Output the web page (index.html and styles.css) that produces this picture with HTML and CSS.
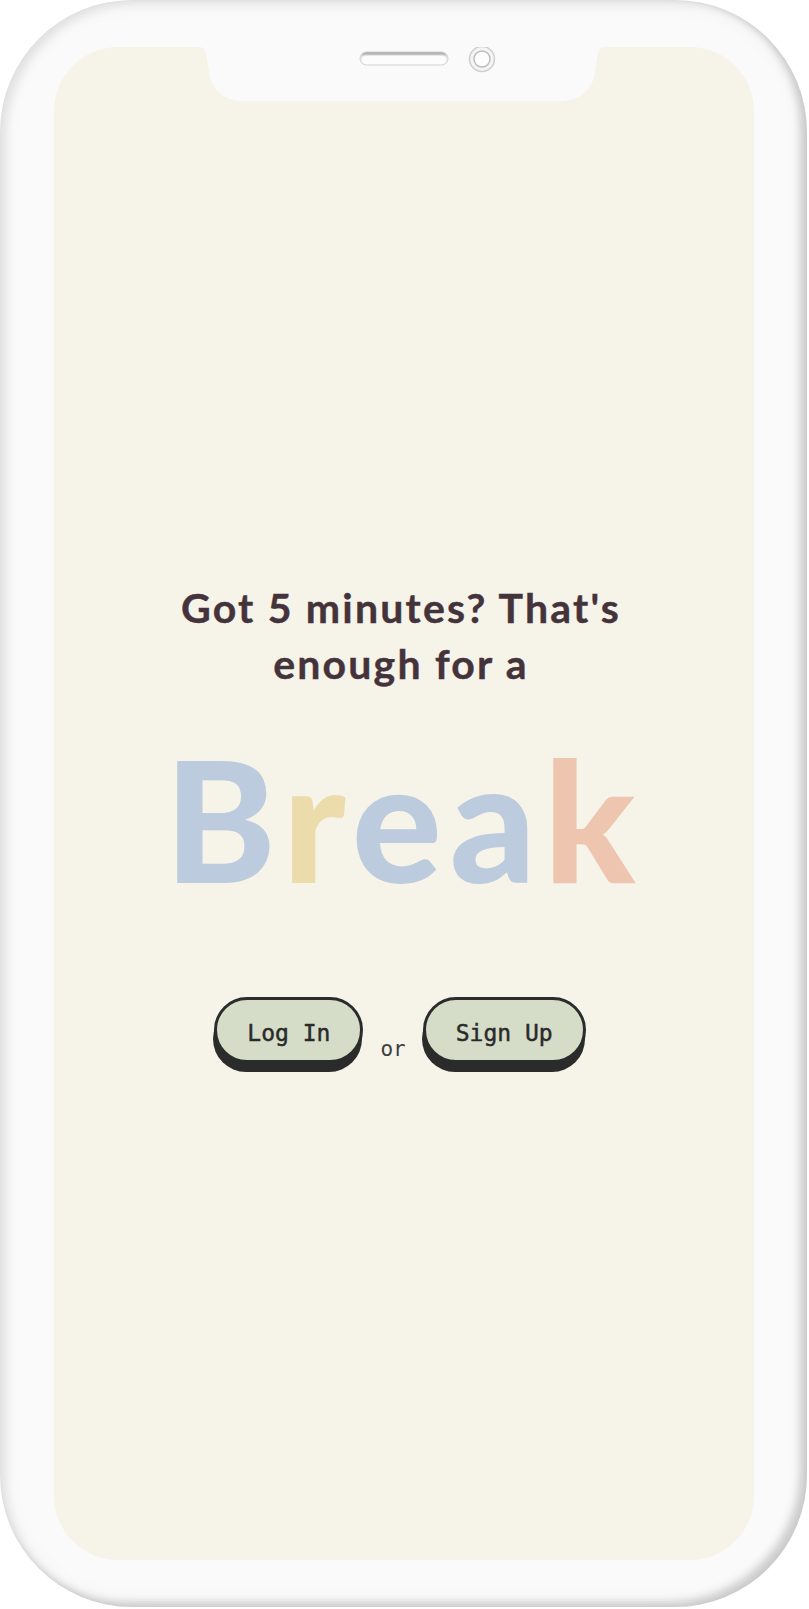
FILE: index.html
```html
<!DOCTYPE html>
<html lang="en">
<head>
<meta charset="utf-8">
<title>Break</title>
<link rel="stylesheet" href="styles.css">
</head>
<body>
<div class="phone">
  <main class="screen">
    <h1 class="headline">Got 5 minutes? That's enough for a</h1>
    <div class="logo"><span class="blue">B</span><span class="yellow">r</span><span class="blue">e</span><span class="blue">a</span><span class="peach last">k</span></div>
    <div class="actions">
      <button class="btn">Log In</button>
      <span class="or">or</span>
      <button class="btn">Sign Up</button>
    </div>
  </main>
  <svg class="notch" width="408" height="56" viewBox="198 47 408 56" aria-hidden="true">
    <defs>
      <linearGradient id="spk" x1="0" y1="0" x2="0" y2="1">
        <stop offset="0" stop-color="#9a9a9a"/>
        <stop offset="0.35" stop-color="#e4e4e4"/>
        <stop offset="1" stop-color="#fbfbfb"/>
      </linearGradient>
    </defs>
    <path d="M198,47 C205,47 206,50 207,58 L209,72 C212,92 225,101.5 248,101.5 L556,101.5 C579,101.5 592,92 595,72 L597,58 C598,50 599,47 606,47 Z" fill="#fafafa"/>
    <rect x="360" y="52" width="88" height="13" rx="6.5" fill="url(#spk)" stroke="#d2d2d2" stroke-width="1"/>
    <rect x="362" y="55.5" width="84" height="8.5" rx="4.2" fill="#fcfcfc"/>
    <circle cx="482" cy="59" r="12.5" fill="#f4f4f4" stroke="#cfcfcf" stroke-width="1.5"/>
    <circle cx="482" cy="59" r="8" fill="#fdfdfd" stroke="#bdbdbd" stroke-width="1.5"/>
  </svg>
</div>
</body>
</html>
```
FILE: styles.css
```css
* { box-sizing: border-box; }

html, body {
  margin: 0;
  padding: 0;
  background: #ffffff;
}

.phone {
  position: relative;
  width: 807px;
  height: 1607px;
  padding: 47px 53px 47px 54px;
  border-radius: 132px;
  background: #fafafa;
  box-shadow:
    inset -7px -5px 9px rgba(0, 0, 0, 0.17),
    inset 6px 4px 10px rgba(0, 0, 0, 0.08),
    inset 0 0 24px rgba(0, 0, 0, 0.05);
}

.screen {
  height: 100%;
  border-radius: 64px;
  background: #f6f3e9;
  display: flex;
  flex-direction: column;
  align-items: center;
  padding-top: 533px;
}

.headline {
  margin: 0;
  width: 520px;
  text-align: center;
  font-family: "Lato", "Noto Sans", sans-serif;
  font-weight: 700;
  font-size: 41px;
  line-height: 56px;
  letter-spacing: 2.2px;
  color: #45333b;
  padding-right: 6px;
  -webkit-text-stroke: 0.4px #45333b;
}

.logo {
  margin-top: 41px;
  font-family: "Lato", "Noto Sans", sans-serif;
  font-weight: 900;
  font-size: 168px;
  line-height: 170px;
  letter-spacing: 8px;
  padding-right: 8px;
}

.last { letter-spacing: 0; }

.blue { color: #bccbdd; }
.yellow { color: #ecdcab; }
.peach { color: #eec5af; }

.actions {
  margin-top: 94px;
  display: flex;
  align-items: flex-end;
  gap: 17px;
  padding-bottom: 9px;
  padding-right: 8px;
}

.btn {
  height: 66px;
  padding: 5px 30px 0;
  border: 3.5px solid #2b2b2b;
  border-radius: 34px;
  background: #d5dcc7;
  box-shadow: -1px 9px 0 0 #2b2b2b;
  font-family: "DejaVu Sans Mono", "Liberation Mono", monospace;
  font-size: 23px;
  line-height: 52px;
  color: #2a2a2a;
  -webkit-text-stroke: 0.45px #2a2a2a;
}

.or {
  font-family: "DejaVu Sans Mono", "Liberation Mono", monospace;
  font-size: 21px;
  line-height: 22px;
  color: #3d3d3d;
  margin-bottom: 3px;
}

.notch {
  position: absolute;
  left: 198px;
  top: 47px;
}
```
